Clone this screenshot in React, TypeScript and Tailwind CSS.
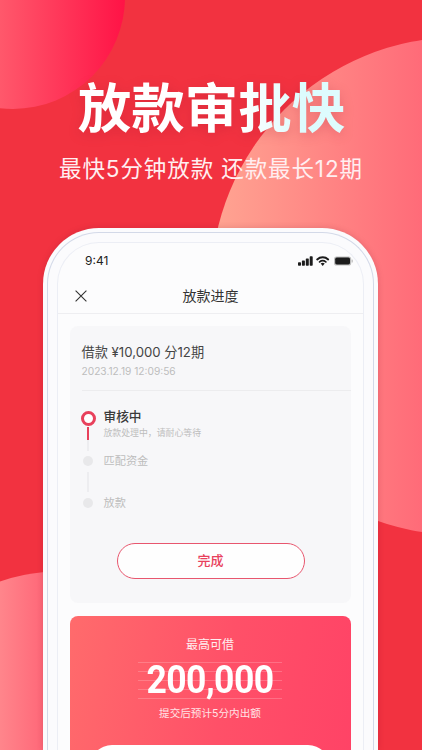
const CJK = "font-['Inter','Noto_Sans_CJK_SC',sans-serif]";

function Signal() {
  return (
    <svg width="55" height="10" viewBox="0 0 55 10" fill="none">
      <rect x="0" y="6.3" width="3" height="3.5" rx="0.7" fill="#1c1c1c" />
      <rect x="3.9" y="4.4" width="3" height="5.4" rx="0.7" fill="#1c1c1c" />
      <rect x="7.8" y="2.4" width="3" height="7.4" rx="0.7" fill="#1c1c1c" />
      <rect x="11.7" y="0.2" width="3" height="9.6" rx="0.7" fill="#1c1c1c" />
      <path d="M19.2 3.4a8.2 8.2 0 0 1 11 0" stroke="#1c1c1c" strokeWidth="2" strokeLinecap="round" />
      <path d="M21.6 5.9a5 5 0 0 1 6.2 0" stroke="#1c1c1c" strokeWidth="1.8" strokeLinecap="round" />
      <path d="M24.7 9.9l-2-2.3a3 3 0 0 1 4 0z" fill="#1c1c1c" />
      <rect x="36" y="0.4" width="17.2" height="9.2" rx="2.6" fill="#bdbdbd" />
      <rect x="37.2" y="1.6" width="14.8" height="6.8" rx="1.6" fill="#1c1c1c" />
      <rect x="53.6" y="3.4" width="1.2" height="3.2" rx="0.6" fill="#bdbdbd" />
    </svg>
  );
}

export default function App() {
  return (
    <div className={`relative h-[750px] w-[422px] overflow-hidden bg-[#f23240] ${CJK}`}>
      <div className="absolute left-[-99px] top-[-115px] h-[224px] w-[224px] rounded-full bg-[linear-gradient(90deg,#ff7078_25%,#ff1346_100%)]" />
      <div className="absolute left-[211px] top-[37px] h-[498px] w-[498px] rounded-full bg-[linear-gradient(90deg,#ffa592_0%,#ff6a78_43%)]" />
      <div className="absolute left-[-136px] top-[571px] h-[400px] w-[400px] rounded-full bg-[linear-gradient(90deg,#ff9696_28%,#ff5f73_48%)]" />

      <div className="relative flex h-[228px] flex-col items-center">
        <h1 className="mt-[76px] h-[66px] bg-[linear-gradient(90deg,#ffffff_0%,#ffffff_60%,#dcfbfd_85%,#dffcfe_100%)] bg-clip-text pl-[1px] text-[53.5px] font-bold leading-[66px] text-transparent drop-shadow-[0_3px_6px_rgba(150,20,40,0.22)]">
          放款审批快
        </h1>
        <p className="mt-[11px] text-[22.5px] leading-[32px] tracking-[0.9px] text-[#ffeef0]">
          最快5分钟放款 还款最长12期
        </p>
      </div>

      <div className="relative ml-[43px] h-[522px] w-[335px] rounded-t-[56px] bg-[#fbfbfd] px-[4px] pt-[4px] shadow-[0_0_6px_rgba(120,20,40,0.2)]">
        <div className="h-full rounded-t-[52px] border-x border-t border-[#d3d9e8] px-[9px] pt-[9px]">
          <div className="h-full rounded-t-[42px] border-x border-t border-[#eceef5] bg-[#fcfcfd]">
            <div className="flex h-[36px] items-center justify-between pl-[27px] pr-[10px]">
              <span className="text-[12px] leading-[18px] text-[#222]">9:41</span>
              <Signal />
            </div>
            <div className="relative flex h-[35px] items-center justify-center border-b border-[#eeeef1]">
              <svg className="absolute left-[17px] top-[11px]" width="12" height="12" viewBox="0 0 12 12" fill="none">
                <path d="M0.6 0.6l10.8 10.8M11.4 0.6L0.6 11.4" stroke="#333" strokeWidth="1.1" />
              </svg>
              <span className="text-[14px] leading-[20px] text-[#333]">放款进度</span>
            </div>

            <div className="pl-[11.5px] pr-[12.5px] pt-[12px]">
              <div className="h-[277px] rounded-[8px] bg-[#f7f7f9] pt-[17px]">
                <div className="pl-[12px]">
                  <div className="text-[13.2px] leading-[18px] text-[#444]">借款 ¥10,000 分12期</div>
                  <div className="mt-[3px] text-[10.2px] leading-[14px] text-[#bdbdbd]">2023.12.19 12:09:56</div>
                </div>
                <div className="ml-[12px] mt-[12px] border-t border-[#ececee]" />

                <div className="pl-[11px] pt-[20px]">
                  <div className="flex gap-[8px]">
                    <div className="flex w-[15px] flex-col items-center">
                      <div className="h-[15px] w-[15px] rounded-full border-[3px] border-[#e8415c] bg-white" />
                      <div className="mt-[1px] h-[13px] w-[2px] bg-[#e8415c]" />
                      <div className="h-[11px] w-[2px] bg-[#ededf0]" />
                    </div>
                    <div className="-mt-[3px]">
                      <div className="text-[12.7px] font-medium leading-[18px] text-[#3a3a3a]">审核中</div>
                      <div className="mt-[1px] text-[8.9px] leading-[12px] text-[#bdbdbd]">放款处理中，请耐心等待</div>
                    </div>
                  </div>

                  <div className="flex items-center gap-[8px]">
                    <div className="flex w-[15px] justify-center">
                      <div className="h-[10px] w-[10px] rounded-full bg-[#e8e8ea]" />
                    </div>
                    <div className="text-[11.2px] leading-[20px] text-[#bdbdbd]">匹配资金</div>
                  </div>
                  <div className="flex w-[15px] justify-center py-[1px]">
                    <div className="h-[20px] w-[2px] bg-[#ededf0]" />
                  </div>
                  <div className="flex items-center gap-[8px]">
                    <div className="flex w-[15px] justify-center">
                      <div className="h-[10px] w-[10px] rounded-full bg-[#e8e8ea]" />
                    </div>
                    <div className="text-[11.2px] leading-[20px] text-[#bdbdbd]">放款</div>
                  </div>
                </div>

                <div className="mt-[30px] flex justify-center pl-[1px]">
                  <div className="flex h-[36px] w-[188px] items-center justify-center rounded-full border border-[#e8566e] bg-[#fefefe] text-[13px] font-medium text-[#e8415c]">
                    完成
                  </div>
                </div>
              </div>

              <div className="mt-[13px] h-[140px] overflow-hidden rounded-t-[8px] bg-[linear-gradient(100deg,#ff6b6c_0%,#ff5068_55%,#ff4366_100%)] pt-[20px] text-center">
                <div className="text-[12px] leading-[18px] text-[#ffeef0]">最高可借</div>
                <div className="relative mx-auto mt-[8px] h-[37px] w-[144px]">
                  <div className="absolute inset-0 flex flex-col justify-between">
                    <div className="h-px bg-white/20" />
                    <div className="h-px bg-white/20" />
                    <div className="h-px bg-white/20" />
                    <div className="h-px bg-white/20" />
                    <div className="h-px bg-white/20" />
                  </div>
                  <div className="relative scale-x-[0.91] font-['Roboto',sans-serif] text-[39px] font-bold leading-[37px] tracking-[-0.6px] text-white">200,000</div>
                </div>
                <div className="mt-[7px] text-[10.6px] leading-[16px] text-[#ffe3e6]">提交后预计5分内出额</div>
                <div className="mx-auto mt-[23px] h-[44px] w-[240px] rounded-t-[22px] bg-white" />
              </div>
            </div>
          </div>
        </div>
      </div>
    </div>
  );
}
